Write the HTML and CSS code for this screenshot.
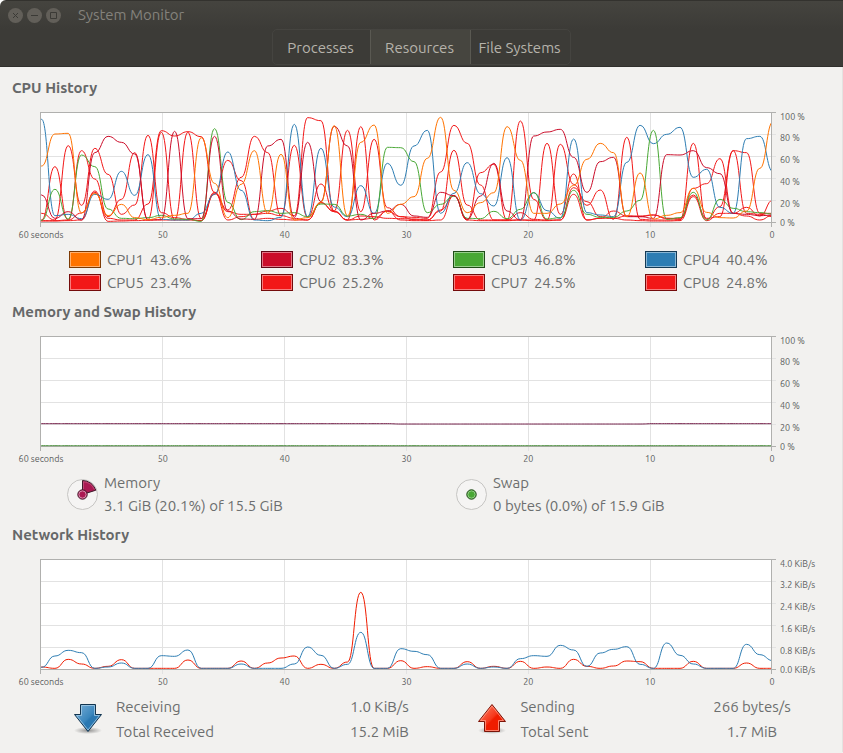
FILE: index.html
```html
<!DOCTYPE html>
<html lang="en">
<head>
<meta charset="utf-8">
<title>System Monitor</title>
<link rel="stylesheet" href="styles.css">
</head>
<body>
<div class="window">
  <header class="header">
    <div class="titlebar">
      <button class="winbtn" aria-label="Close"><svg viewBox="0 0 15 15"><path d="M5 5l5 5M10 5l-5 5"/></svg></button>
      <button class="winbtn" aria-label="Minimize"><svg viewBox="0 0 15 15"><path d="M4 7.500h7"/></svg></button>
      <button class="winbtn" aria-label="Maximize"><svg viewBox="0 0 15 15"><path d="M4.500 4.500h6v6h-6z"/></svg></button>
      <h1 class="title">System Monitor</h1>
    </div>
    <nav class="tabs">
      <button class="tab">Processes</button>
      <button class="tab active">Resources</button>
      <button class="tab">File Systems</button>
    </nav>
  </header>
  <main class="content">
    <section>
      <h2>CPU History</h2>
      <div class="chart">
        <svg class="plot" id="cpu" viewBox="0 0 732 111" preserveAspectRatio="none"></svg>
        <div class="ylabels"><span>100 %</span><span>80 %</span><span>60 %</span><span>40 %</span><span>20 %</span><span>0 %</span></div>
      </div>
      <div class="xlabels"><span>60 seconds</span><span>50</span><span>40</span><span>30</span><span>20</span><span>10</span><span>0</span></div>
      <div class="cpus">
        <div class="cpu"><button class="swatch orange" aria-label="CPU1 color"></button><span>CPU1</span><span>43.6%</span></div>
        <div class="cpu"><button class="swatch crimson" aria-label="CPU2 color"></button><span>CPU2</span><span>83.3%</span></div>
        <div class="cpu"><button class="swatch green" aria-label="CPU3 color"></button><span>CPU3</span><span>46.8%</span></div>
        <div class="cpu"><button class="swatch blue" aria-label="CPU4 color"></button><span>CPU4</span><span>40.4%</span></div>
        <div class="cpu"><button class="swatch red" aria-label="CPU5 color"></button><span>CPU5</span><span>23.4%</span></div>
        <div class="cpu"><button class="swatch red" aria-label="CPU6 color"></button><span>CPU6</span><span>25.2%</span></div>
        <div class="cpu"><button class="swatch red" aria-label="CPU7 color"></button><span>CPU7</span><span>24.5%</span></div>
        <div class="cpu"><button class="swatch red" aria-label="CPU8 color"></button><span>CPU8</span><span>24.8%</span></div>
      </div>
    </section>
    <section>
      <h2>Memory and Swap History</h2>
      <div class="chart">
        <svg class="plot" id="memory" viewBox="0 0 732 111" preserveAspectRatio="none"></svg>
        <div class="ylabels"><span>100 %</span><span>80 %</span><span>60 %</span><span>40 %</span><span>20 %</span><span>0 %</span></div>
      </div>
      <div class="xlabels"><span>60 seconds</span><span>50</span><span>40</span><span>30</span><span>20</span><span>10</span><span>0</span></div>
      <div class="mems">
        <div class="mem">
          <svg class="pie" viewBox="0 0 31 31">
            <circle cx="15.500" cy="15.500" r="15" fill="#f5f4f3" stroke="#c6c5c3"/>
            <path d="M15.500 15.500V1.500A14 14 0 0 1 28.800 11.200Z" fill="#ab1852" stroke="#3f1a2b"/>
            <path d="M16.500 12V2.700A13 13 0 0 1 27.400 10.600" fill="none" stroke="#c9668c" stroke-width=".6"/>
            <circle cx="15.500" cy="15.500" r="4.700" fill="#ab1852" stroke="#3f1a2b"/>
            <circle cx="15.500" cy="15.500" r="3.600" fill="none" stroke="#d78bab"/>
          </svg>
          <div><div>Memory</div><div>3.1 GiB (20.1%) of 15.5 GiB</div></div>
        </div>
        <div class="mem">
          <svg class="pie" viewBox="0 0 31 31">
            <circle cx="15.500" cy="15.500" r="15" fill="#f5f4f3" stroke="#c6c5c3"/>
            <circle cx="15.500" cy="15.500" r="4.700" fill="#49a835" stroke="#1d4315"/>
            <circle cx="15.500" cy="15.500" r="3.600" fill="none" stroke="#92cb86"/>
          </svg>
          <div><div>Swap</div><div>0 bytes (0.0%) of 15.9 GiB</div></div>
        </div>
      </div>
    </section>
    <section>
      <h2>Network History</h2>
      <div class="chart">
        <svg class="plot" id="network" viewBox="0 0 732 111" preserveAspectRatio="none"></svg>
        <div class="ylabels"><span>4.0 KiB/s</span><span>3.2 KiB/s</span><span>2.4 KiB/s</span><span>1.6 KiB/s</span><span>0.8 KiB/s</span><span>0.0 KiB/s</span></div>
      </div>
      <div class="xlabels"><span>60 seconds</span><span>50</span><span>40</span><span>30</span><span>20</span><span>10</span><span>0</span></div>
      <div class="nets">
        <div class="net">
          <svg class="arrow" viewBox="0 0 28 30">
            <defs>
              <linearGradient id="down" x1="0" y1="0" x2="1" y2="1"><stop offset="0" stop-color="#7db1d8"/><stop offset=".5" stop-color="#3a86bd"/><stop offset=".55" stop-color="#2a78b2"/><stop offset="1" stop-color="#2a78b2"/></linearGradient>
              <radialGradient id="shade"><stop offset="0" stop-color="#000" stop-opacity=".4"/><stop offset="1" stop-color="#000" stop-opacity="0"/></radialGradient>
            </defs>
            <ellipse cx="14" cy="26.500" rx="14" ry="3.500" fill="url(#shade)"/>
            <path d="M6.500.500h15v10h6L14 27.500.500 10.500h6z" fill="url(#down)" stroke="#12344f"/>
            <path d="M7.500 1.500h13v10h5L14 26 2.500 11.500h5z" fill="none" stroke="#a5cbe6" stroke-width=".8"/>
          </svg>
          <div class="labels"><div>Receiving</div><div>Total Received</div></div>
          <div class="values"><div>1.0 KiB/s</div><div>15.2 MiB</div></div>
        </div>
        <div class="net">
          <svg class="arrow" viewBox="0 0 28 30">
            <defs>
              <linearGradient id="up" x1="0" y1="0" x2="1" y2="1"><stop offset="0" stop-color="#ff8a70"/><stop offset=".5" stop-color="#f5361a"/><stop offset=".55" stop-color="#f01c00"/><stop offset="1" stop-color="#f01c00"/></linearGradient>
            </defs>
            <ellipse cx="14" cy="26.500" rx="14" ry="3.500" fill="url(#shade)"/>
            <path d="M14 .500L27.500 17.500h-6v10h-15v-10h-6z" fill="url(#up)" stroke="#7a1408"/>
            <path d="M14 2L25.500 16.500h-5v10h-13v-10h-5z" fill="none" stroke="#ff9c88" stroke-width=".8"/>
          </svg>
          <div class="labels"><div>Sending</div><div>Total Sent</div></div>
          <div class="values"><div>266 bytes/s</div><div>1.7 MiB</div></div>
        </div>
      </div>
    </section>
  </main>
</div>
<script src="charts.js"></script>
</body>
</html>
```
FILE: charts.js
```js
// Samples are listed oldest first, as depth below the chart's origin in thirds of a unit.
const STEP = 13.3;
const NS = "http://www.w3.org/2000/svg";

function add(parent, name, attrs) {
  const el = document.createElementNS(NS, name);
  for (const key in attrs) el.setAttribute(key, attrs[key]);
  parent.appendChild(el);
  return el;
}

function curve(values, origin) {
  let x = 1.6;
  let y = values[0] / 3 - origin;
  let d = `M0 ${y}H${x}`;
  for (const value of values.slice(1)) {
    const mid = x + STEP / 2;
    const next = value / 3 - origin;
    x += STEP;
    d += `C${mid} ${y} ${mid} ${next} ${x} ${next}`;
    y = next;
  }
  return d;
}

function draw(id, origin, series) {
  const svg = document.getElementById(id);
  const clip = add(svg, "clipPath", { id: id + "-clip" });
  add(clip, "rect", { x: 1, y: 1, width: 730, height: 110 });
  add(svg, "rect", { class: "back", x: 0, y: 0, width: 732, height: 111 });
  for (let i = 1; i < 5; i++) add(svg, "path", { class: "grid", d: `M0 ${i * 22 + 0.5}H736` });
  for (let i = 1; i < 6; i++) add(svg, "path", { class: "grid", d: `M${i * 122 + 0.5} 0V115` });
  add(svg, "path", { class: "axis", d: "M0.5 115V0.5H736M731.5 0V115M0 110.5H736" });
  const group = add(svg, "g", { "clip-path": `url(#${id}-clip)` });
  for (const [color, values] of series) add(group, "path", { class: "line " + color, d: curve(values, origin) });
}

draw("cpu", 7, [
  ["red", [348,348,347,345,258,349,348,347,346,345,345,345,347,262,345,335,328,318,310,332,38,47,320,345,65,345,318,345,347,347,345,272,345,347,347,347,345,347,347,345,268,345,340,340,345,347,348,348,347,275,347,325,325,333,345,330]],
  ["red", [347,347,345,324,262,340,345,345,297,77,93,80,95,262,315,217,94,143,332,340,345,293,320,345,333,335,340,341,342,345,315,272,345,203,178,345,345,345,115,328,207,345,340,318,333,335,330,340,343,250,236,161,325,307,333,285]],
  ["red", [325,345,122,301,130,208,328,300,91,323,338,343,347,268,166,227,343,340,343,345,345,293,318,345,343,340,318,335,344,345,318,136,300,345,345,345,323,343,345,345,248,290,335,340,333,333,330,340,340,270,340,335,137,325,328,335]],
  ["red", [345,185,345,137,222,335,283,143,344,82,345,82,341,265,320,328,328,325,332,121,337,237,318,76,320,103,308,335,337,340,201,61,115,240,345,345,48,283,345,118,238,301,255,343,97,343,345,345,345,115,343,305,137,143,325,325]],
  ["blue", [43,332,328,341,268,283,199,271,149,343,345,345,325,268,141,256,345,347,337,58,335,130,306,335,242,325,175,241,123,76,325,265,173,266,303,158,345,263,317,340,102,323,330,335,172,61,116,88,67,217,193,307,325,101,94,200]],
  ["green", [346,253,342,150,185,312,340,341,338,331,342,343,349,71,292,344,320,317,325,323,335,297,298,333,328,341,127,128,170,323,298,273,340,341,319,341,313,263,342,338,256,328,337,337,318,286,76,343,338,262,345,283,310,320,323,327]],
  ["crimson", [270,340,320,345,143,94,112,147,344,344,79,341,341,94,318,342,343,123,103,337,112,290,64,123,345,325,318,298,333,337,262,272,343,273,175,318,345,93,81,73,157,262,170,157,335,335,340,149,150,137,188,206,325,328,332,330]],
  ["orange", [183,87,85,324,265,332,298,338,344,337,331,325,98,235,338,238,137,325,148,345,338,292,62,333,112,60,325,298,275,160,37,256,323,293,263,65,166,325,325,297,241,163,115,143,335,204,342,331,323,250,322,338,339,318,190,50]]
]);

draw("memory", 9, [
  ["ram", Array.from({ length: 56 }, (_, i) => (i > 26 && i < 46 ? 291 : 290))],
  ["swap", Array(56).fill(356)]
]);

draw("network", 9, [
  ["sent", [351,355,328,342,355,349,329,355,355,355,355,330,355,355,355,333,355,339,324,318,355,343,355,336,127,355,355,332,355,350,355,355,335,355,349,355,334,355,351,355,328,349,355,348,333,335,355,355,355,334,355,355,355,339,355,355]],
  ["blue", [352,318,301,308,355,351,339,355,355,317,319,300,355,355,355,342,355,355,355,342,291,316,355,343,247,355,355,296,304,314,355,355,342,355,351,355,326,317,319,286,300,349,309,298,290,343,355,279,316,342,355,355,355,283,314,332]]
]);
```
FILE: styles.css
```css
* { box-sizing: border-box; }

body {
  margin: 0;
  background: #fff;
  color: #6c6e6e;
  font: 15px/18px Ubuntu, "Open Sans", sans-serif;
}

button {
  padding: 0;
  border: 0;
  font: inherit;
}

.window {
  min-height: 100vh;
  border-radius: 6px 0 0 0;
  background: #f2f1ef;
  overflow: hidden;
}

.header {
  height: 67px;
  background: linear-gradient(#45443f, #3c3b37 28px);
  border-top: 1px solid #33322e;
  border-bottom: 1px solid #302f2c;
}

.titlebar {
  display: flex;
  align-items: center;
  gap: 4px;
  height: 28px;
  padding-left: 8px;
}

.winbtn {
  width: 15px;
  height: 15px;
  border-radius: 50%;
  background: #625f59;
}

.winbtn svg {
  display: block;
  fill: none;
  stroke: #3b3a36;
}

.title {
  margin: 0 0 0 13px;
  color: #84827c;
  font-size: 15px;
  font-weight: 400;
}

.tabs {
  display: grid;
  grid-template-columns: 97px 101px 99px;
  width: max-content;
  margin: 0 auto;
  border: 1px solid #454440;
  border-radius: 5px;
}

.tab {
  height: 34px;
  padding: 2px 2px 0 0;
  background: none;
  color: #b6b3ab;
}

.tab.active {
  background: #46453f;
  border: solid #5a5952;
  border-width: 0 1px;
}

.content {
  padding: 12px 0 8px;
  border-right: 1px solid #e4e3e1;
}

section + section { margin-top: 8px; }

h2 {
  margin: 0 0 15px 12px;
  color: #666869;
  font-size: 15px;
  line-height: 18px;
}

.chart {
  display: flex;
  height: 111px;
  padding-left: 40px;
}

.plot {
  flex: 1;
  min-width: 0;
  height: 111px;
  overflow: visible;
}

.plot path {
  fill: none;
  vector-effect: non-scaling-stroke;
}

.back { fill: #fff; }
.plot .grid { stroke: #e2e2e2; shape-rendering: crispEdges; }
.plot .axis { stroke: #b0b0ae; shape-rendering: crispEdges; }
.line { stroke-width: 1px; }
.line.red { stroke: #f21717; }
.line.crimson { stroke: #cb0c29; }
.line.orange { stroke: #ff7300; }
.line.green { stroke: #49a835; }
.line.blue { stroke: #2d7db3; }
.line.sent { stroke: #f01c00; }
.line.ram { stroke: #75204a; }
.line.swap { stroke: #4c8f3e; }

.ylabels {
  display: grid;
  grid-template-rows: 20px repeat(4, 22px) 16px;
  align-items: center;
  width: 70px;
  height: 124px;
  margin-top: -5px;
  padding-left: 8px;
}

.ylabels,
.xlabels {
  color: #5c5e5e;
  font: 9px/12px Ubuntu, Roboto, sans-serif;
}

.xlabels {
  display: flex;
  justify-content: space-between;
  height: 12px;
  margin: 6px 70px 6px 41px;
}

.xlabels span {
  display: flex;
  justify-content: center;
  width: 0;
  white-space: nowrap;
}

.cpus {
  display: grid;
  grid-template-columns: repeat(4, 1fr);
  padding: 1px 5px 1px 69px;
}

.cpu {
  display: flex;
  align-items: center;
  gap: 6px;
  height: 23px;
}

.swatch {
  width: 32px;
  height: 17px;
  border: 1px solid;
  box-shadow: inset 0 0 0 1px #ffffff70;
}

.swatch.orange { background: #ff7300; border-color: #7d3a04; }
.swatch.crimson { background: #cb0c29; border-color: #5f0715; }
.swatch.green { background: #49a835; border-color: #1f4d17; }
.swatch.blue { background: #2d7db3; border-color: #143a55; }
.swatch.red { background: #f21717; border-color: #740b0b; }

.mems {
  display: grid;
  grid-template-columns: 1fr 1fr;
  gap: 3px;
  padding: 0 0 1px 67px;
  line-height: 23px;
}

.mem {
  display: flex;
  align-items: center;
  gap: 6px;
}

.pie { width: 31px; height: 31px; }

.nets {
  display: grid;
  grid-template-columns: 396fr 364fr;
  gap: 9px;
  padding-left: 74px;
  line-height: 25px;
}

.net {
  display: flex;
  align-items: center;
  gap: 14px;
  padding-right: 45px;
}

.arrow { width: 28px; height: 30px; }
.labels { flex: 1; }

.values {
  width: 90px;
  text-align: center;
}
```
